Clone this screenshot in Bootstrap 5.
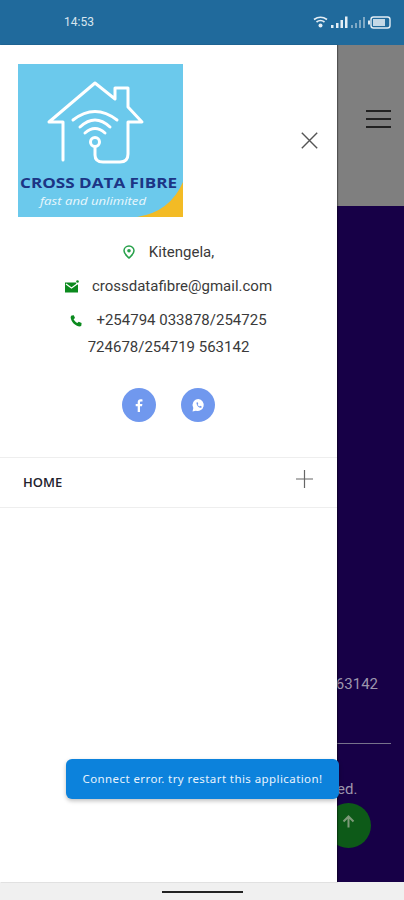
<!DOCTYPE html>
<html lang="en">
<head>
<meta charset="utf-8">
<title>Cross Data Fibre</title>
<link href="https://cdn.jsdelivr.net/npm/bootstrap@5.3.0/dist/css/bootstrap.min.css" rel="stylesheet">
<style>
html,body{height:900px;overflow:hidden}
body{font-family:Roboto,"Liberation Sans",sans-serif;background:#fff;position:relative}
.status-strip{height:45px;background:#206a9c;color:#d9e6ef;font-size:12px;padding:0 13px 2px 64px}
.app-main{height:837px}
.side-drawer{width:337px;background:#fff;box-shadow:1px 0 1px rgba(0,0,0,.35);z-index:1}
.logo-row{padding:19px 19px 0 18px;height:172px}
.logo-img{width:165px;height:153px;display:block}
.close-x{margin:68px 0 0 0;width:17px;height:17px;display:block}
.contact-list{margin-top:22px;font-size:15px;color:#3a3a3a;line-height:27px;text-align:center;padding:0 20px}
.contact-line{margin-bottom:7px}
.contact-line svg{vertical-align:-2px;margin-right:14px}
.contact-line .mail-mark{margin-right:13px}
.social-row{gap:25px;margin-top:27px;margin-bottom:35px}
.social-dot{width:34px;height:34px;border-radius:50%;background:#7098ee}
.menu-row{height:51px;border-top:1px solid #eee;border-bottom:1px solid #eee;padding:0 24px 0 23px;font-family:"Open Sans","Liberation Sans",sans-serif;font-size:13px;font-weight:600;color:#22222e}
.plus-mark{margin-top:-7px}
.behind-panel{overflow:hidden;min-width:0}
.behind-head{height:161px;background:#7f7f7f;padding:0 13px 19px 0}
.burger-bar{width:25px;height:2.500px;background:#222;margin:5.500px 0 0 auto;display:block}
.behind-body{background:#170047;color:#9d96ad;font-size:15px;white-space:nowrap;position:relative}
.phone-end{direction:rtl;text-align:right;margin:468px 26px 0 0;line-height:20px}
.rule-line{height:1px;background:#77728c;margin:49px 13px 0 0}
.copy-end{margin:35px 0 0 0;line-height:20px}
.fab-up{position:absolute;left:-11px;top:597px;width:45px;height:45px;border-radius:50%;background:#0d5a18}
.toast-box{position:absolute;left:66px;top:759px;width:273px;height:40px;background:#0c82dc;border-radius:6px;color:#e8f3fc;font-family:"Noto Sans","Liberation Sans",sans-serif;font-size:11.500px;letter-spacing:.42px;box-shadow:0 2px 4px rgba(0,0,0,.25);z-index:5}
.gesture-strip{height:18px;background:#f0f0f0}
.gesture-pill{width:81px;height:2px;background:#222;display:block;margin-top:1px}
</style>
</head>
<body>
<div class="status-strip d-flex align-items-center justify-content-between">
  <span>14:53</span>
  <svg width="78" height="14" viewBox="0 0 78 14" aria-hidden="true">
    <g fill="none" stroke="#e4eef5" stroke-width="1.700">
      <path d="M1 4.500Q7.500 0 14 4.500"/><path d="M3.500 7Q7.500 4 11.500 7"/>
    </g>
    <circle cx="7.500" cy="10.500" r="2" fill="#e4eef5"/>
    <g fill="#e4eef5">
      <rect x="18" y="10" width="2.500" height="3"/><rect x="23" y="8" width="2.500" height="5"/><rect x="27.500" y="5" width="2.500" height="8"/><rect x="32" y="1.500" width="2.500" height="11.500"/>
    </g>
    <g fill="#7fa9c5">
      <rect x="38" y="10" width="2" height="3"/><rect x="42" y="8" width="2" height="5"/><rect x="46" y="5" width="2" height="8"/><rect x="50" y="2" width="2" height="11"/>
    </g>
    <rect x="55" y="5.500" width="2" height="4" fill="#e4eef5"/>
    <rect x="58" y="2" width="19" height="11" rx="2.500" fill="none" stroke="#e4eef5" stroke-width="1.400"/>
    <rect x="60" y="4" width="12" height="7" fill="#c4d8e6"/>
  </svg>
</div>

<div class="app-main d-flex">
  <aside class="side-drawer flex-shrink-0">
    <div class="logo-row d-flex justify-content-between align-items-start">
      <svg class="logo-img" viewBox="18 64 165 153" role="img" aria-label="Cross Data Fibre logo">
        <rect x="18" y="64" width="165" height="153" fill="#6bc9ec"/>
        <path d="M183 182V217H137Q170 212 183 182Z" fill="#f3bb25"/>
        <g fill="none" stroke="#fff" stroke-width="3" stroke-linecap="round" stroke-linejoin="round">
          <path d="M63 160V122H49L95 83L115 99V88H128V107L142 122H128V154Q128 162 120 162H103Q95 162 95 155V147"/>
          <circle cx="95" cy="142" r="4.500"/>
          <path d="M73 120Q95 103 117 120"/><path d="M80 127Q95 113 110 127"/><path d="M85 133Q95 124 105 133"/>
        </g>
        <text x="20" y="188" textLength="157" lengthAdjust="spacingAndGlyphs" font-family="Open Sans, Liberation Sans, sans-serif" font-weight="700" font-size="15" fill="#1c3585">CROSS DATA FIBRE</text>
        <text x="40" y="205" textLength="106" lengthAdjust="spacingAndGlyphs" font-family="Open Sans, Liberation Sans, sans-serif" font-style="italic" font-size="10.500" fill="#e9f7fc">fast and unlimited</text>
      </svg>
      <svg class="close-x" viewBox="0 0 17 17" aria-label="Close"><path d="M.8.8 16.200 16.200M16.200.8.8 16.200" stroke="#555" stroke-width="1.400" fill="none"/></svg>
    </div>

    <div class="contact-list">
      <div class="contact-line">
        <svg width="12" height="14" viewBox="0 0 12 14" aria-hidden="true"><path d="M6 1C3 1 1 3.200 1 5.800 1 9 4 11 6 13 8 11 11 9 11 5.800 11 3.200 9 1 6 1Z" fill="none" stroke="#27a04a" stroke-width="1.500"/><circle cx="6" cy="5.800" r="1.800" fill="#27a04a"/></svg>Kitengela,
      </div>
      <div class="contact-line">
        <svg class="mail-mark" width="14" height="13" viewBox="0 0 14 13" aria-hidden="true"><path d="M0 2.500H11L11.500 4.500H13V12.500H0Z" fill="#0b8a1e"/><path d="M1 4 6.500 8 12 4" fill="none" stroke="#fff" stroke-width="1.200"/><circle cx="12.500" cy="1.500" r="1.300" fill="#0b8a1e"/></svg>crossdatafibre@gmail.com
      </div>
      <div class="contact-line">
        <svg width="12" height="12" viewBox="0 0 12 12" aria-hidden="true"><path d="M1.500.5 3.800.2 5 3 3.600 4.300C4.300 5.800 5.500 7 7.300 8L8.700 6.700 11.600 8 11.300 10.700 10 11.500C5 11 1 7 .6 2Z" fill="#0b8a1e"/></svg>+254794 033878/254725 724678/254719 563142
      </div>
    </div>

    <div class="social-row d-flex justify-content-center">
      <span class="social-dot d-flex align-items-center justify-content-center">
        <svg width="8" height="13" viewBox="0 0 8 13" aria-hidden="true"><path d="M5 13V7.200H7L7.400 5H5V3.600C5 3 5.300 2.500 6 2.500H7.500V.4C7 .3 6.300.2 5.600.2 3.800.2 2.700 1.300 2.700 3.300V5H.7V7.200H2.700V13Z" fill="#fff"/></svg>
      </span>
      <span class="social-dot d-flex align-items-center justify-content-center">
        <svg width="15" height="15" viewBox="0 0 15 15" aria-hidden="true"><path d="M7.500 1A6 6 0 0 0 2.300 10L1.500 13.500 5 12.700A6 6 0 1 0 7.500 1Z" fill="#fff"/><path d="M5.500 4.500 6.700 4.300 7.300 6 6.600 6.700C7 7.500 7.700 8.100 8.400 8.500L9.100 7.800 10.700 8.500 10.400 9.800C8 10 5.300 7.500 5.500 4.500Z" fill="#7098ee"/></svg>
      </span>
    </div>

    <div class="menu-row d-flex align-items-center justify-content-between">
      <span>HOME</span>
      <svg class="plus-mark" width="17" height="18" viewBox="0 0 17 18" aria-label="Expand"><path d="M0 9H17M8.500 0V18" stroke="#666" stroke-width="1.200"/></svg>
    </div>
  </aside>

  <div class="behind-panel flex-grow-1 d-flex flex-column">
    <div class="behind-head d-flex flex-column justify-content-center">
      <span class="burger-bar"></span><span class="burger-bar"></span><span class="burger-bar"></span>
    </div>
    <div class="behind-body flex-grow-1">
      <div class="phone-end">&#8206;563142</div>
      <div class="rule-line"></div>
      <div class="copy-end">ed.</div>
      <div class="fab-up d-flex align-items-center justify-content-center">
        <svg width="45" height="45" viewBox="0 0 45 45" aria-label="Back to top"><path d="M22.500 24.500V13.500M17.500 18.500l5-5 5 5" fill="none" stroke="#7d9a78" stroke-width="2"/></svg>
      </div>
    </div>
  </div>
</div>

<div class="gesture-strip d-flex justify-content-center align-items-center">
  <span class="gesture-pill"></span>
</div>

<div class="toast-box d-flex align-items-center justify-content-center">Connect error. try restart this application!</div>

<script src="https://cdn.jsdelivr.net/npm/bootstrap@5.3.0/dist/js/bootstrap.bundle.min.js"></script>
</body>
</html>
